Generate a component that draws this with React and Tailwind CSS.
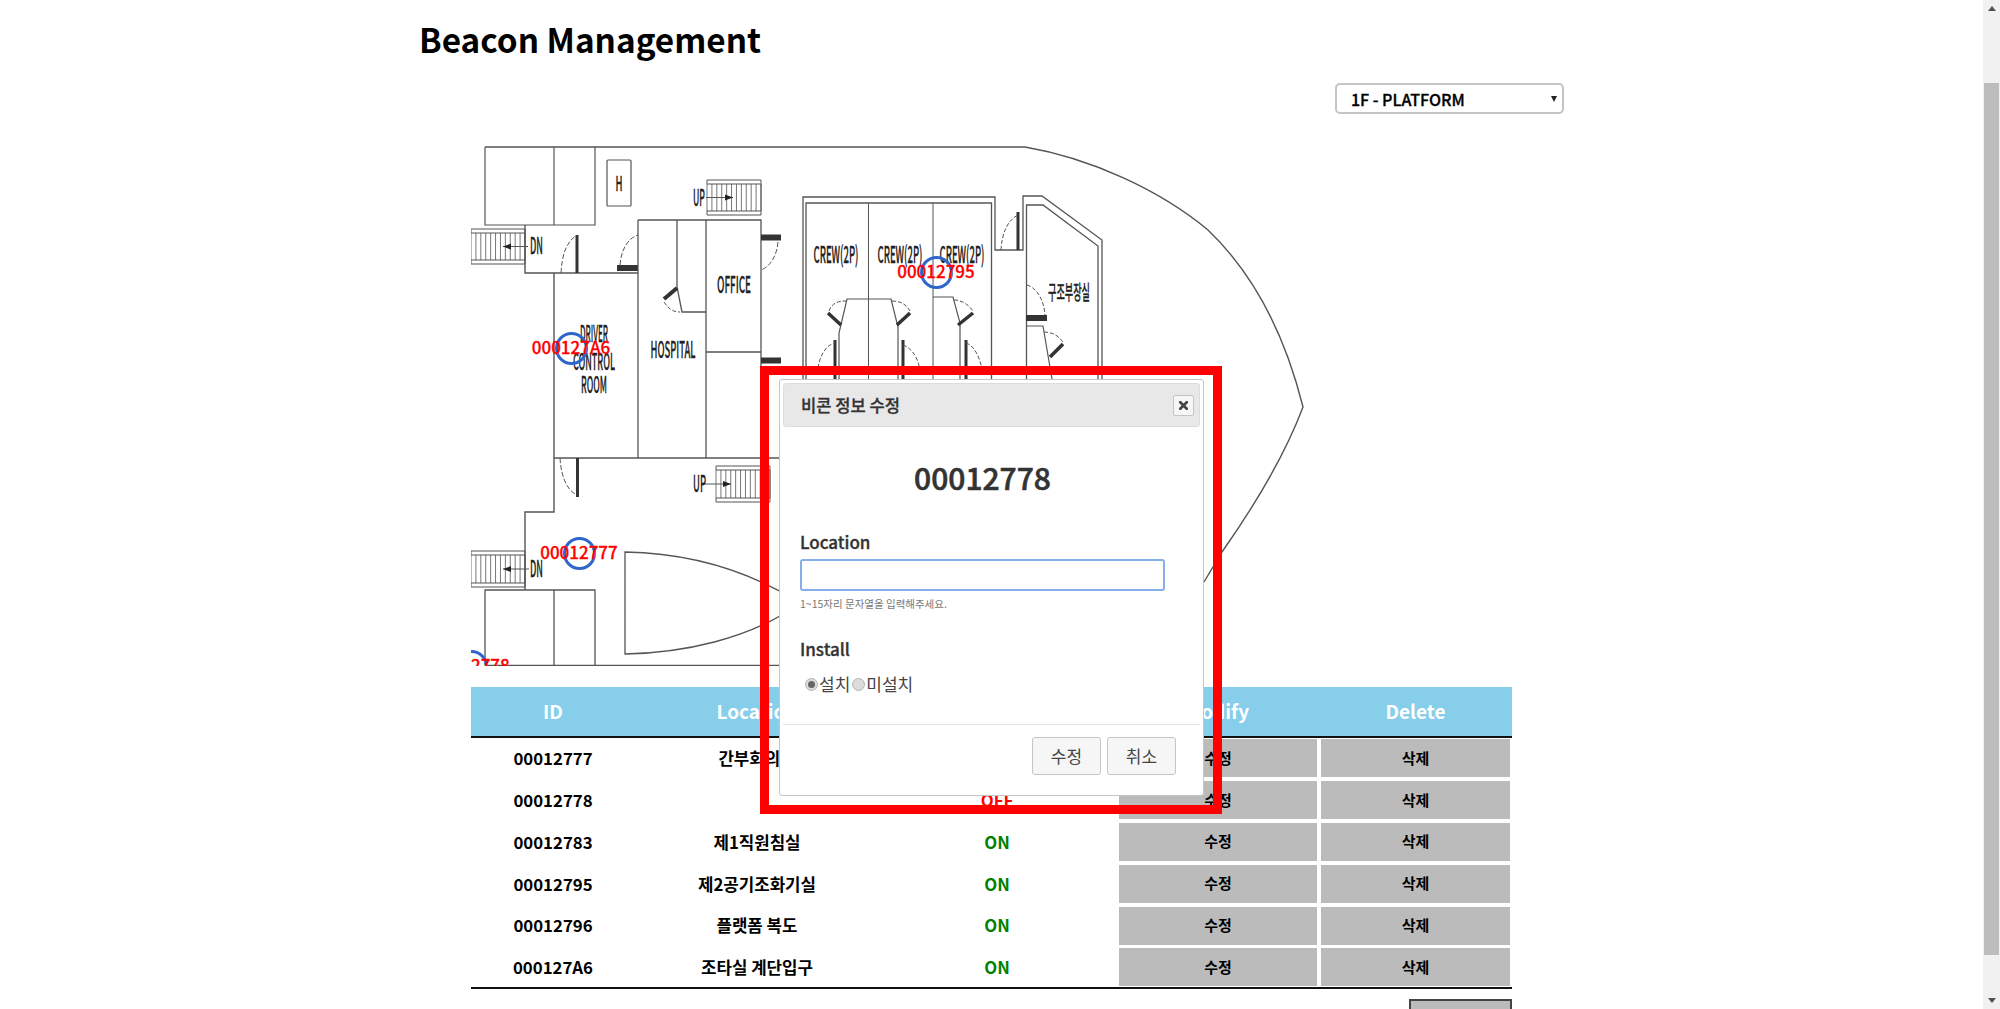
import { X } from "lucide-react";

const beacons = [
  { id: "00012795", x: 465, y: 132 },
  { id: "000127A6", x: 100, y: 208 },
  { id: "00012777", x: 108, y: 413 },
  { id: "00012778", x: 0, y: 526 },
];

const rows = [
  { id: "00012777", location: "간부회의실", on: true },
  { id: "00012778", location: "", on: false },
  { id: "00012783", location: "제1직원침실", on: true },
  { id: "00012795", location: "제2공기조화기실", on: true },
  { id: "00012796", location: "플랫폼 복도", on: true },
  { id: "000127A6", location: "조타실 계단입구", on: true },
];

// stairs on the deck plan, drawn in page coordinates
const Stairs = ({ x, y, w, h, ax1, ax2, head }) => {
  const steps = [];
  for (let i = 0; i <= 11; i++) steps.push(x + (i * w) / 11);
  return (
    <g>
      <path d={`M${x} ${y}H${x + w}M${x} ${y + 4}H${x + w}M${x} ${y + h - 4}H${x + w}M${x} ${y + h}H${x + w}`} strokeWidth="1.2" />
      {steps.map((s, i) => (
        <path key={i} d={`M${s} ${y + 4}V${y + h - 4}`} strokeWidth="0.8" />
      ))}
      <path d={`M${x} ${y}V${y + 4}M${x} ${y + h - 4}V${y + h}M${x + w} ${y}V${y + h}`} strokeWidth="1" />
      <path d={`M${ax1} ${y + h / 2}H${ax2}`} strokeWidth="1" />
      <path d={head} fill="#222" stroke="none" />
    </g>
  );
};

const Label = ({ x, y, w, children, size = 23 }) => (
  <text
    x={x}
    y={y - 2}
    textLength={w}
    lengthAdjust="spacingAndGlyphs"
    textAnchor="middle"
    dominantBaseline="central"
    fontSize={size}
    fontWeight="500"
    fill="#222"
    stroke="#222"
    strokeWidth="0.3"
  >
    {children}
  </text>
);

const DeckPlan = () => (
  <svg viewBox="471 140 1041 526" className="w-[1041px] h-[526px] block" fill="none" stroke="#555">
    {/* hull */}
    <path d="M485 147H1025C1090 158 1160 190 1208 230C1255 275 1285 335 1303 407C1285 455 1255 505 1222 552L1204 582" strokeWidth="1.4" />
    <path d="M485 665.5H1204" strokeWidth="1.6" />

    {/* top left */}
    <path d="M485 147V225H595V147M554 147V225" strokeWidth="1.2" />
    <rect x="607" y="160" width="24" height="46" rx="1" strokeWidth="1.2" />
    <Label x={619} y={184} w={7} size={20}>H</Label>
    <Stairs x={707} y={180} w={54} h={35} ax1={706} ax2={733} head="M733 197.500l-8 -3v6z" />
    <Label x={699} y={198} w={12}>UP</Label>
    <Stairs x={471} y={229} w={54} h={35} ax1={503} ax2={528} head="M503 246.500l8 -3v6z" />
    <Label x={536.500} y={246} w={13}>DN</Label>

    {/* corridor + driver room */}
    <path d="M525 225V273H638M554 273V458M554 458H779M554 458V512H525V590" strokeWidth="1.4" />
    <path d="M577 235V273" stroke="#333" strokeWidth="3" />
    <path d="M561 273C562 255 566 242 577 235" strokeDasharray="5 2" />
    <path d="M617 268H638" stroke="#333" strokeWidth="6" />
    <path d="M620 265C621 250 628 238 638 235" strokeDasharray="5 2" />

    {/* hospital + office */}
    <path d="M638 220H761V458M638 220V458M706 220V458M677 220V287L682 312H706M706 352H761" strokeWidth="1.3" />
    <path d="M664 299L677 288" stroke="#333" strokeWidth="4" />
    <path d="M664 302C668 308 672 312 680 312" strokeDasharray="4 2" />
    <path d="M761 237.500H781" stroke="#333" strokeWidth="6" />
    <path d="M778 242C777 255 771 266 761 270" strokeDasharray="5 2" />
    <path d="M761 360.500H781" stroke="#333" strokeWidth="6" />
    <Label x={734} y={285} w={34}>OFFICE</Label>
    <Label x={673} y={350} w={45}>HOSPITAL</Label>
    <Label x={594} y={334} w={28}>DRIVER</Label>
    <Label x={594} y={362} w={42}>CONTROL</Label>
    <Label x={594} y={385} w={26}>ROOM</Label>

    {/* lower deck */}
    <path d="M577.500 458V497" stroke="#333" strokeWidth="3" />
    <path d="M560 458C561 475 566 490 577 495" strokeDasharray="5 2" />
    <Stairs x={716} y={466} w={54} h={36} ax1={703} ax2={731} head="M731 484l-8 -3v6z" />
    <Label x={699.500} y={484} w={13}>UP</Label>
    <Stairs x={471} y={551} w={54} h={36} ax1={503} ax2={529} head="M503 569l8 -3v6z" />
    <Label x={536.500} y={569} w={13}>DN</Label>
    <path d="M485 665V590H595V665M554 590V665" strokeWidth="1.3" />
    <path d="M625 654V552C680 553 740 565 800 603C750 640 680 653 625 654Z" strokeWidth="1.3" />

    {/* crew block */}
    <path d="M803 379V197H995V250H1023V196H1042L1102 240V379" strokeWidth="1.3" />
    <path d="M806 379V203H991.500V379M1026.500 379V205H1043L1098 246V379" strokeWidth="1.3" />
    <path d="M868.500 203V379M933 203V379" strokeWidth="1" />
    <Label x={836} y={255} w={45}>CREW(2P)</Label>
    <Label x={900} y={255} w={45}>CREW(2P)</Label>
    <Label x={962} y={255} w={45}>CREW(2P)</Label>
    <path d="M839 379V333L847 299H891L898 327V379M933 297H953L960 323V379" strokeWidth="1.2" />
    <path d="M828 313L841 325M910 313L897 325M973 313L958 325" stroke="#333" strokeWidth="3.500" />
    <path d="M829 311C832 303 838 301 846 301M892 301C900 301 906 304 910 311M954 300C962 300 969 305 973 311" strokeDasharray="4 2" />
    <path d="M835 340V379M903 340V379M966 340V379" stroke="#333" strokeWidth="3" />
    <path d="M818 368C820 355 826 345 835 343M903 345C912 348 918 358 920 370M966 343C975 346 980 358 982 370" strokeDasharray="4 2" />

    {/* rescue room */}
    <path d="M1018 212V250" stroke="#333" strokeWidth="3" />
    <path d="M1001 250C1002 232 1008 220 1018 215" strokeDasharray="4 2" />
    <path d="M1026 318H1047" stroke="#333" strokeWidth="6" />
    <path d="M1027 285C1037 288 1044 300 1045 315" strokeDasharray="4 2" />
    <path d="M1026 326H1043L1052 379" strokeWidth="1.2" />
    <path d="M1050 357L1063 344" stroke="#333" strokeWidth="3.500" />
    <path d="M1044 332C1052 332 1060 336 1063 343" strokeDasharray="4 2" />
    <Label x={1069} y={293} w={42} size={20}>구조부장실</Label>
  </svg>
);

const Radio = ({ checked, label }) => (
  <label className="flex items-center gap-[1px] text-[17px] text-[#454545]">
    <span className="w-[13px] h-[13px] rounded-full border border-[#b5b5b5] bg-[#dcdcdc] flex items-center justify-center">
      {checked && <span className="w-[7px] h-[7px] rounded-full bg-[#666]" />}
    </span>
    {label}
  </label>
);

const EditDialog = () => (
  <div className="absolute left-[779px] top-[379px] w-[425px] h-[417px] p-[3px] bg-white border border-[#c5c5c5] rounded-[3px] text-[#333]">
    <div className="h-[44px] flex items-center justify-between pl-[17px] pr-[5px] bg-[#e8e8e8] border border-[#ddd] rounded-[3px]">
      <span className="text-[16.6px] font-medium [-webkit-text-stroke-width:0.3px]">비콘 정보 수정</span>
      <button className="w-[21px] h-[21px] flex items-center justify-center bg-[#f6f6f6] border border-[#c5c5c5] rounded-[2px]">
        <X size={13} strokeWidth={5} color="#454545" />
      </button>
    </div>
    <div className="h-[298px] border-b border-[#e3e3e3] pt-[30px] pl-[17px]">
      <div className="w-[365px] h-[40px] leading-[40px] text-center text-[30px] font-medium [-webkit-text-stroke-width:0.6px]">00012778</div>
      <div className="mt-[33px] h-[24px] leading-[24px] text-[17px] font-medium [-webkit-text-stroke-width:0.35px]">Location</div>
      <input
        type="text"
        className="block mt-[5px] w-[365px] h-[32px] bg-white border-2 border-[#86adec] rounded-[3px] outline-none"
      />
      <div className="mt-[6px] h-[14px] leading-[14px] text-[10.5px] text-[#777]">1~15자리 문자열을 입력해주세요.</div>
      <div className="mt-[26px] h-[24px] leading-[24px] text-[17px] font-medium [-webkit-text-stroke-width:0.35px]">Install</div>
      <div className="mt-[11px] h-[24px] flex items-center gap-[2px] pl-[5px]">
        <Radio checked label="설치" />
        <Radio label="미설치" />
      </div>
    </div>
    <div className="flex justify-end gap-[6px] pt-[12px] pr-[24px]">
      <button className="w-[69px] h-[38px] bg-[#f6f6f6] border border-[#c5c5c5] rounded-[3px] text-[17px] text-[#454545]">수정</button>
      <button className="w-[69px] h-[38px] bg-[#f6f6f6] border border-[#c5c5c5] rounded-[3px] text-[17px] text-[#454545]">취소</button>
    </div>
  </div>
);

const Scrollbar = () => (
  <div className="w-[17px] h-full bg-[#f1f1f1] flex flex-col items-center shrink-0">
    <div className="h-[17px] flex items-center justify-center">
      <div className="w-0 h-0 border-x-[4px] border-x-transparent border-b-[5px] border-b-[#505050]" />
    </div>
    <div className="mt-[66px] w-[15px] h-[872px] bg-[#bdbdbd]" />
    <div className="mt-auto h-[17px] flex items-center justify-center">
      <div className="w-0 h-0 border-x-[4px] border-x-transparent border-t-[5px] border-t-[#505050]" />
    </div>
  </div>
);

const App = () => {
  return (
    <div className="relative flex h-[1009px] overflow-hidden bg-white text-black font-['Noto_Sans_CJK_KR','Noto_Sans',sans-serif]">
      <div className="flex-1 min-w-0">
        <div className="w-[1143px] mx-auto">
          <h1 className="pt-[15px] -ml-[1px] h-[62px] text-[33.3px] leading-[48px] font-bold">Beacon Management</h1>

          <div className="flex justify-end mt-[21px] -mr-[1px]">
            <div className="relative">
              <select className="block appearance-none w-[229px] h-[31px] pl-[14px] bg-white border-2 border-[#c4c4c4] rounded-[5px] text-[16px] font-medium [-webkit-text-stroke-width:0.3px]">
                <option>1F - PLATFORM</option>
              </select>
              <div className="absolute right-[7px] top-[13px] w-0 h-0 border-x-[3px] border-x-transparent border-t-[6px] border-t-[#222]" />
            </div>
          </div>

          <div className="relative mt-[26px] mx-[51px] h-[526px] overflow-hidden">
            <DeckPlan />
            {beacons.map((b) => (
              <div key={b.id} className="absolute" style={{ left: b.x, top: b.y }}>
                <div className="absolute -left-[16.5px] -top-[16.5px] w-[33px] h-[33px] rounded-full border-[3px] border-[#2f66cc]" />
                <div className="absolute -left-[40px] -top-[13px] w-[80px] h-[24px] leading-[24px] text-center text-[17px] font-medium text-[#ff0000] [-webkit-text-stroke-width:0.3px]">
                  {b.id}
                </div>
              </div>
            ))}
          </div>

          <table className="mt-[21px] mx-[51px] w-[1041px] table-fixed border-collapse">
            <colgroup>
              <col className="w-[164px]" />
              <col className="w-[244px]" />
              <col className="w-[236px]" />
              <col className="w-[204px]" />
              <col className="w-[193px]" />
            </colgroup>
            <thead>
              <tr className="h-[50px] bg-[#87ceeb] text-white text-[19px] font-bold">
                <th>ID</th>
                <th>Location</th>
                <th>Install</th>
                <th>Modify</th>
                <th>Delete</th>
              </tr>
            </thead>
            <tbody className="border-t-2 border-b-2 border-[#111]">
              {rows.map((row) => (
                <tr key={row.id} className="h-[41.9px] text-center text-[16.8px] font-bold">
                  <td className="pt-[1px]">{row.id}</td>
                  <td className="pt-[1px]">{row.location}</td>
                  <td className={row.on ? "pt-[1px] text-[#008000]" : "pt-[1px] text-[#ff0000]"}>{row.on ? "ON" : "OFF"}</td>
                  <td className="p-0">
                    <button className="block ml-[4px] w-[198px] h-[38px] bg-[#bbbbbb] text-[15px] font-bold">수정</button>
                  </td>
                  <td className="p-0">
                    <button className="block ml-[2px] w-[189px] h-[38px] bg-[#bbbbbb] text-[15px] font-bold">삭제</button>
                  </td>
                </tr>
              ))}
            </tbody>
          </table>

          <div className="flex justify-end mx-[51px] mt-[10px]">
            <div className="w-[103px] h-[40px] bg-[#bbbbbb] border-2 border-[#444]" />
          </div>
        </div>
      </div>

      <Scrollbar />

      <EditDialog />
      <div className="absolute left-[760px] top-[366px] w-[462px] h-[448px] border-[9px] border-[#ff0000]" />
    </div>
  );
};

export default App;
